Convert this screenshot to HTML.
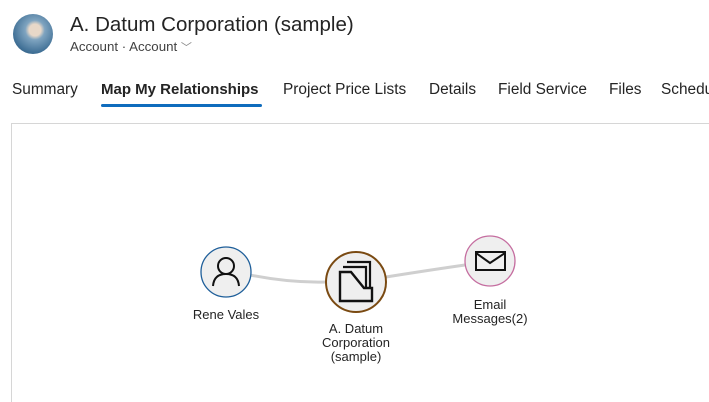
<!DOCTYPE html>
<html><head><style>
html,body{margin:0;width:709px;height:402px;overflow:hidden}
body{background:#fff;font-family:"Liberation Sans",sans-serif;position:relative;color:#242424}
.abs{position:absolute;white-space:nowrap}
.tab{position:absolute;top:81px;font-size:15.4px;color:#242424}
.lbl{position:absolute;font-size:13px;color:#242424;text-align:center;line-height:14px;transform:translateX(-50%)}
</style></head><body>
<div class="abs" style="left:13px;top:14px;width:40px;height:40px;border-radius:50%;background:radial-gradient(circle at 55% 40%,#e8d8c8 0 18%,#7fa4c0 30%,#3f6f95 70%,#2a4c6a)"></div>
<div class="abs" style="left:70px;top:13px;font-size:20.5px;color:#242424">A. Datum Corporation (sample)</div>
<div class="abs" style="left:70px;top:39px;font-size:13.3px;color:#424242">Account · Account <span style="color:#888;font-size:11px">﹀</span></div>
<div class="tab" style="left:12px">Summary</div>
<div class="tab" style="left:101px;font-weight:bold;font-size:15px">Map My Relationships</div>
<div class="abs" style="left:101px;top:104px;width:161px;height:3px;background:#0f6cbd;border-radius:2px"></div>
<div class="tab" style="left:283px">Project Price Lists</div>
<div class="tab" style="left:429px">Details</div>
<div class="tab" style="left:498px">Field Service</div>
<div class="tab" style="left:609px">Files</div>
<div class="tab" style="left:661px">Schedu</div>
<div class="abs" style="left:11px;top:123px;width:697px;height:279px;border:1px solid #d6d6d6;border-bottom:none;border-right:none"></div>
<svg class="abs" style="left:0;top:0" width="709" height="402">
<path d="M250 275 Q290 283 326 282" stroke="#cfcfcf" stroke-width="3" fill="none"/>
<path d="M386 277 Q430 270 465 265" stroke="#cfcfcf" stroke-width="3" fill="none"/>
<circle cx="226" cy="272" r="25" fill="#efefef" stroke="#1f5f9a" stroke-width="1.3"/>
<circle cx="226" cy="266" r="8" fill="none" stroke="#111" stroke-width="2"/>
<path d="M213 286 Q214 274 226 274 Q238 274 239 286" fill="none" stroke="#111" stroke-width="2"/>
<circle cx="356" cy="282" r="30" fill="#efefef" stroke="#7a4a12" stroke-width="2"/>
<path d="M347 262 H370 V294 M343 267 H366 V294" fill="none" stroke="#111" stroke-width="2.2"/>
<path d="M340 301 V272 H351 L364 288 H372 V301 Z" fill="#efefef" stroke="#111" stroke-width="2.4"/>
<circle cx="490" cy="261" r="25" fill="#efefef" stroke="#c56ea0" stroke-width="1.3"/>
<rect x="476" y="252" width="29" height="18" fill="none" stroke="#111" stroke-width="2"/>
<path d="M476 253 L490 263 L505 253" fill="none" stroke="#111" stroke-width="2"/>
</svg>
<div class="lbl" style="left:226px;top:308px">Rene Vales</div>
<div class="lbl" style="left:356px;top:322px">A. Datum<br>Corporation<br>(sample)</div>
<div class="lbl" style="left:490px;top:298px">Email<br>Messages(2)</div>
</body></html>
